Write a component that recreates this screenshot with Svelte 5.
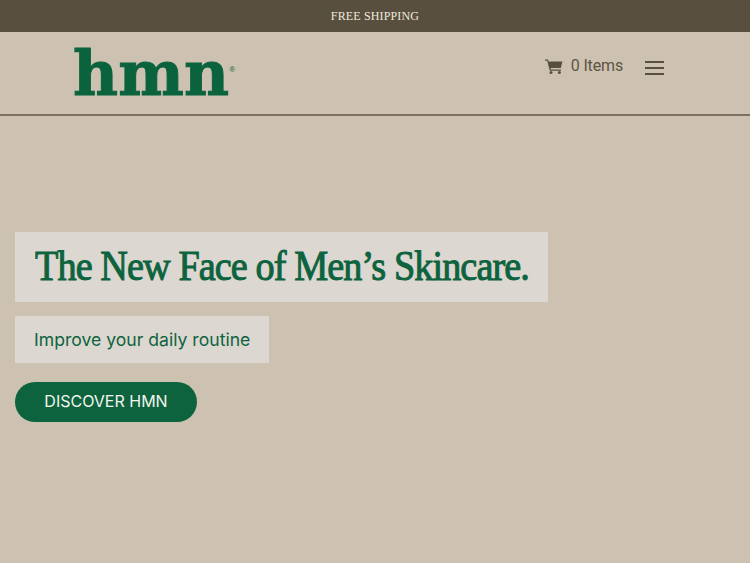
<script>
  const title = "The New Face of Men’s Skincare.";
</script>

<div class="promo">FREE SHIPPING</div>

<header>
  <a class="logo" href="#top"><span class="mark">hmn</span><sup>®</sup></a>
  <div class="tools">
    <a class="cart" href="#cart">
      <svg width="18" height="15" viewBox="0 0 18 15" aria-hidden="true">
        <path d="M0 0.5h3l.6 2H17.5l-1.7 6.6H5.6l.4 1.4h10v1.3H4.8L2.2 1.8H0z" fill="#594f3f" />
        <circle cx="6" cy="13.4" r="1.5" fill="#594f3f" />
        <circle cx="14.4" cy="13.4" r="1.5" fill="#594f3f" />
      </svg>
      <span>0 Items</span>
    </a>
    <button class="menu" aria-label="Menu"><i></i><i></i><i></i></button>
  </div>
</header>

<main>
  <h1><span>{title}</span></h1>
  <p>Improve your daily routine</p>
  <a class="cta" href="#discover">DISCOVER HMN</a>
</main>

<style>
  :global(body) {
    background: #cdc1b1;
  }

  .promo {
    height: 32px;
    background: #594f3f;
    color: #efe9dd;
    font: 12px/32px "Liberation Serif", serif;
    letter-spacing: 0.15px;
    text-align: center;
  }

  header {
    height: 82px;
    display: flex;
    justify-content: space-between;
    padding: 0 86px 0 73px;
    border-bottom: 2px solid #7c7160;
  }

  .logo {
    display: flex;
    align-items: flex-start;
    height: 62px;
    margin-top: 11px;
    color: #0b633d;
    text-decoration: none;
  }

  .mark {
    font: bold 62px/62px "DejaVu Serif", serif;
    letter-spacing: 0.2px;
    -webkit-text-stroke: 1px #0b633d;
  }

  .logo sup {
    margin-top: 23px;
    font: 8px/1 "Liberation Sans", sans-serif;
  }

  .tools {
    display: flex;
    align-items: flex-start;
    gap: 22px;
    padding-top: 25px;
  }

  .cart {
    display: flex;
    align-items: center;
    gap: 8px;
    color: #5c5542;
    font: 16px/18px Roboto, sans-serif;
    text-decoration: none;
  }

  .cart span {
    letter-spacing: -0.15px;
  }

  .menu {
    display: flex;
    flex-direction: column;
    gap: 4px;
    width: 19px;
    margin: 4px 0 0;
    padding: 0;
    border: 0;
    background: none;
  }

  .menu i {
    display: block;
    height: 2px;
    background: #594f3f;
  }

  main {
    display: flex;
    flex-direction: column;
    align-items: flex-start;
    padding: 116px 0 0 15px;
  }

  h1 {
    width: 533px;
    height: 70px;
    box-sizing: border-box;
    margin: 0;
    padding-left: 20px;
    background: #dcd7d0;
    color: #0e633f;
    font: 400 42px/69px "Liberation Serif", serif;
    letter-spacing: -1px;
    white-space: nowrap;
    -webkit-text-stroke: 1px #0e633f;
  }

  h1 span {
    display: inline-block;
    transform: scaleX(0.91);
    transform-origin: left center;
  }

  p {
    width: 254px;
    height: 47px;
    box-sizing: border-box;
    margin: 14px 0 0;
    padding-left: 19px;
    background: #dcd7d0;
    color: #0e633f;
    font: 17.6px/47px Inter, sans-serif;
    white-space: nowrap;
  }

  .cta {
    width: 182px;
    height: 40px;
    margin-top: 19px;
    border-radius: 20px;
    background: #0e633f;
    color: #f2f5ee;
    font: 16px/38px Inter, sans-serif;
    text-align: center;
    text-decoration: none;
  }
</style>
